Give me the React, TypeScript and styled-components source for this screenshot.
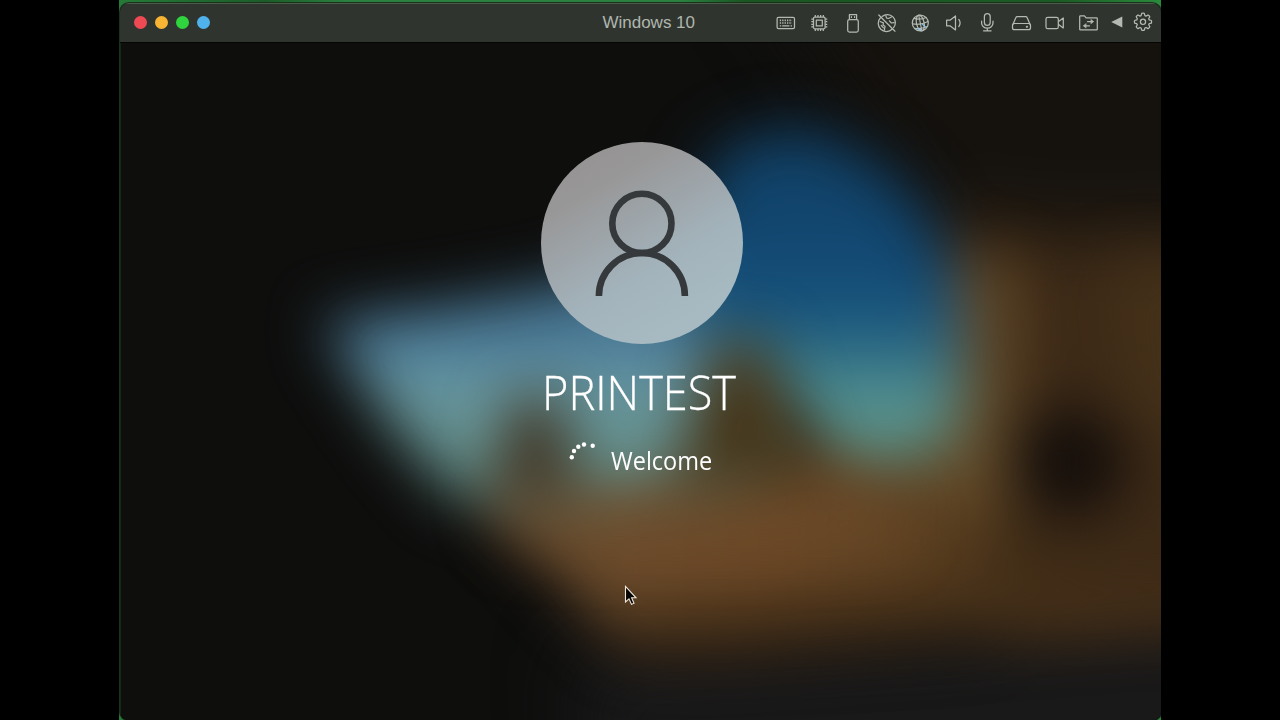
import React from "react";
import styled, { createGlobalStyle } from "styled-components";

const GlobalStyle = createGlobalStyle`
  * { box-sizing: border-box; }
  body { margin: 0; background: #000; overflow: hidden; }
`;

const Desktop = styled.div`
  width: 1280px;
  height: 720px;
  padding: 0 119px;
  background: #000;
  overflow: hidden;
`;

const Backdrop = styled.div`
  height: 720px;
  padding: 3px 0 0 1px;
  overflow: hidden;
  background: linear-gradient(90deg, #267a38 0%, #1c5c28 14%, #2b8040 22%, #2b8040 54%, #1a5522 60%, #1c5a24 90%, #2a8a3c 100%);
`;

const Window = styled.main`
  display: flex;
  flex-direction: column;
  width: 1041px;
  height: 717px;
  border-radius: 9px 9px 8px 8px;
  overflow: hidden;
  background: #0d0d0d;
  box-shadow: 0 0 0 1px #17331b;
`;

const TitleBar = styled.header`
  flex: none;
  display: grid;
  grid-template-columns: 1fr auto 1fr;
  align-items: center;
  height: 40px;
  padding: 0 9px 1px 13.5px;
  background: #2f352e;
  border-top: 1px solid #4b5a49;
  border-bottom: 1px solid #050505;
`;

const Lights = styled.div`
  display: flex;
  gap: 8px;
`;

const Light = styled.span<{ $color: string }>`
  width: 13px;
  height: 13px;
  border-radius: 50%;
  background: ${(p) => p.$color};
`;

const Title = styled.h1`
  margin: 0 0 0 12px;
  font: 400 17px/20px "Liberation Sans", Arial, sans-serif;
  color: #b0b6ae;
  white-space: nowrap;
`;

const Tools = styled.nav`
  display: flex;
  justify-content: flex-end;
  align-items: center;
  padding-top: 1px;
`;

const Tool = styled.svg<{ $w?: number }>`
  display: block;
  flex: none;
  width: ${(p) => p.$w ?? 33.6}px;
  height: 22px;
  fill: none;
  stroke: #b4bab1;
  stroke-width: 1.25;
  stroke-linecap: round;
  stroke-linejoin: round;
  overflow: visible;
`;

const Screen = styled.section`
  position: relative;
  flex: 1;
  overflow: hidden;
  border-left: 1px solid #14281a;
`;

const Wallpaper = styled.svg`
  position: absolute;
  inset: 0 0 0 -1px;
  width: 1041px;
  height: 677px;
`;

const Login = styled.div`
  position: relative;
  display: flex;
  flex-direction: column;
  align-items: center;
  width: 1040px;
  padding: 99px 0 0 1px;
`;

const Avatar = styled.div`
  width: 202px;
  height: 202px;
  border-radius: 50%;
  background: linear-gradient(150deg, #969393 12%, #989797 24%, #9ca2a6 38%, #a3b3bb 60%, #a7bac1 82%);
`;

const UserName = styled.h2`
  margin: 20px 4px 0 0;
  font: 300 47px/56px "Open Sans", "Noto Sans", sans-serif;
  color: #fff;
  white-space: nowrap;
  transform: scaleX(0.96);
  -webkit-text-stroke: 0.3px #fff;
`;

const Status = styled.div`
  display: flex;
  align-items: center;
  gap: 13px;
  width: 144px;
  height: 40px;
  margin: 20px 3px 0 0;
`;

const Spinner = styled.svg`
  flex: none;
  width: 30px;
  height: 30px;
  margin-bottom: 10px;
  fill: #fff;
`;

const Welcome = styled.span`
  font: 400 25px/34px "Open Sans", "Noto Sans", sans-serif;
  color: #fff;
  white-space: nowrap;
  transform: scaleX(0.94);
  transform-origin: left center;
`;

const Pointer = styled.svg`
  position: absolute;
  left: 503px;
  top: 542px;
  width: 14px;
  height: 21px;
`;

function Toolbar() {
  return (
    <Tools>
      <Tool viewBox="-16.8 -11 33.6 22">
        <rect x="-8.7" y="-5.6" width="17.4" height="11.2" rx="1.4" />
        <path d="M-6 -2.6H6.2M-6 0H6.2" strokeWidth="1.7" strokeDasharray="1.3 1.1" strokeLinecap="butt" />
        <path d="M-6 2.8h1.4M-3.6 2.8h7.2M4.8 2.8h1.4" strokeLinecap="butt" />
      </Tool>
      <Tool viewBox="-16.3 -11 33.6 22">
        <rect x="-5.8" y="-5.8" width="11.6" height="11.6" rx="1.2" />
        <rect x="-3" y="-3" width="6" height="6" />
        <path d="M-4 -6v-2M-1.3 -6v-2M1.3 -6v-2M4 -6v-2M-4 6v2M-1.3 6v2M1.3 6v2M4 6v2M-6 -4h-2M-6 -1.3h-2M-6 1.3h-2M-6 4h-2M6 -4h2M6 -1.3h2M6 1.3h2M6 4h2" strokeLinecap="butt" />
      </Tool>
      <Tool viewBox="-16 -11 33.6 22">
        <path d="M-3.6 -3.6V-8.4h7.2v4.8" />
        <rect x="-5.3" y="-3.5" width="10.6" height="12.6" rx="1.8" />
        <path d="M-1.6 -6.4v.8M1.6 -6.4v.8" />
      </Tool>
      <Tool viewBox="-16.8 -11 33.6 22">
        <path d="M-6.3 -5.3A8.1 8.1 0 0 0 5.5 6M-4.7 -6.6A8.1 8.1 0 0 1 6.8 4.7" />
        <path d="M-8 -8L8.2 8.2" />
        <path d="M-6.7 -1.5l3.3 1.4 -.4 2.2 2 1.2-.6 3.9M-1 -7.3l.8 2.4 2.4.2L4.6 -6M2.6 -2.2l2 2.2 2.8-.3M-5.5 2.5l2.2 2.3" strokeWidth="1.2" />
      </Tool>
      <Tool viewBox="-16.3 -11 33.6 22">
        <circle r="8" />
        <ellipse rx="3.8" ry="8" transform="rotate(-12)" />
        <path d="M-1.6 -7.8L1.6 7.8M-7.9 .8Q0 2.5 7.8 -1.5M-6.5 -4.6Q0 -2.7 5.7 -5.6M-5.8 5.4Q1 6.4 6.9 3.6" strokeWidth="1.1" />
        <path d="M-3 5.6l3.5 1M2 1l3 3" stroke="#8dc3ec" strokeWidth="1.1" />
      </Tool>
      <Tool viewBox="-16.8 -11 33.6 22">
        <path d="M-7.2 -2.8h3.4L1.7 -7V7L-3.8 2.8h-3.4zM5 -3.6Q7.6 0 5 3.6" />
      </Tool>
      <Tool viewBox="-16.3 -10.5 33.6 22">
        <rect x="-2.9" y="-9" width="5.8" height="12" rx="2.9" />
        <path d="M-5.7 -1.4V.5a5.7 5.2 0 0 0 11.4 0v-1.9M0 5.8V8.1M-3.8 8.3H3.8" />
      </Tool>
      <Tool viewBox="-16.5 -11 33.6 22">
        <path d="M-8.6 1.5L-5.7 -5.3Q-5.3 -6.3 -4.2 -6.3H4.2Q5.3 -6.3 5.7 -5.3L8.6 1.5" />
        <rect x="-9" y="0.5" width="18" height="6.2" rx="2" />
        <circle cx="5.4" cy="3.8" r=".5" />
      </Tool>
      <Tool viewBox="-16.8 -11 33.6 22">
        <rect x="-8.8" y="-5.7" width="12.3" height="11.4" rx="1.8" />
        <path d="M3.8 -1.5L8.5 -5V5L3.8 1.5" />
      </Tool>
      <Tool viewBox="-16.5 -11 33.6 22">
        <path d="M-8.8 6.2V-6.5Q-8.8 -7.2 -8 -7.2h4l1.6 2H8Q8.8 -5.2 8.8 -4.4V6.2Q8.8 7 8 7H-8Q-8.8 7 -8.8 6.2z" />
        <path d="M-1 -1.4H4.4M1 2.8H-4.4" />
        <path d="M2.6 -3.5L5.2 -1.4 2.6 .7zM-2.6 .7L-5.2 2.8 -2.6 4.9z" fill="#b4bab1" strokeWidth=".5" />
      </Tool>
      <Tool viewBox="-12 -11 28.7 22" $w={28.7}>
        <path d="M-5.8 -1L5.3 -6.4V4.4z" fill="#b4bab1" stroke="none" />
      </Tool>
      <Tool viewBox="-9 -11 18 22" $w={18}>
        <g transform="translate(0 -1.2)">
          <path d="M-1.3 -8.4Q0 -8.8 1.3 -8.4L1.9 -6.2 3 -5.7 5 -6.8Q6.2 -6.2 6.8 -5L5.7 -3 6.2 -1.9 8.4 -1.3Q8.8 0 8.4 1.3L6.2 1.9 5.7 3 6.8 5Q6.2 6.2 5 6.8L3 5.7 1.9 6.2 1.3 8.4Q0 8.8 -1.3 8.4L-1.9 6.2 -3 5.7 -5 6.8Q-6.2 6.2 -6.8 5L-5.7 3 -6.2 1.9 -8.4 1.3Q-8.8 0 -8.4 -1.3L-6.2 -1.9 -5.7 -3 -6.8 -5Q-6.2 -6.2 -5 -6.8L-3 -5.7 -1.9 -6.2z" />
          <circle r="2.6" />
        </g>
      </Tool>
    </Tools>
  );
}

function BlurredWallpaper() {
  return (
    <Wallpaper viewBox="120 43 1041 677" preserveAspectRatio="none">
      <defs>
        <filter id="soft" filterUnits="userSpaceOnUse" x="0" y="-100" width="1400" height="1000" colorInterpolationFilters="sRGB">
          <feGaussianBlur stdDeviation="29" />
        </filter>
        <filter id="wide" filterUnits="userSpaceOnUse" x="0" y="-100" width="1500" height="1000" colorInterpolationFilters="sRGB">
          <feGaussianBlur stdDeviation="36" />
        </filter>
        <linearGradient id="arch" gradientUnits="userSpaceOnUse" x1="0" y1="120" x2="0" y2="470">
          <stop offset="0" stopColor="#103e62" />
          <stop offset=".3" stopColor="#12466f" />
          <stop offset=".52" stopColor="#144f7a" />
          <stop offset=".67" stopColor="#2f6d84" />
          <stop offset=".8" stopColor="#569492" />
          <stop offset="1" stopColor="#5c897a" />
        </linearGradient>
        <linearGradient id="sea" gradientUnits="userSpaceOnUse" x1="0" y1="280" x2="0" y2="500">
          <stop offset="0" stopColor="#3b6884" />
          <stop offset=".3" stopColor="#4e7e9c" />
          <stop offset=".5" stopColor="#6999a0" />
          <stop offset="1" stopColor="#5f8378" />
        </linearGradient>
        <linearGradient id="sand" gradientUnits="userSpaceOnUse" x1="480" y1="0" x2="1161" y2="0">
          <stop offset="0" stopColor="#6a4e30" />
          <stop offset=".4" stopColor="#6d4826" />
          <stop offset=".65" stopColor="#5c4020" />
          <stop offset=".8" stopColor="#402c16" />
          <stop offset="1" stopColor="#3a2814" />
        </linearGradient>
      </defs>
      <rect x="120" y="43" width="1041" height="677" fill="#0e0e0d" />
      <g filter="url(#wide)">
        <path d="M700 -100H1500V260H960z" fill="#15120e" />
        <path d="M570 655L1500 620V900H600z" fill="#19191a" />
        <path d="M930 215L1040 235 1350 230V615L1000 630z" fill="#3d2a17" />
      </g>
      <g filter="url(#soft)">
        <path d="M440 450H1000L1050 560 1350 550V605L900 636 720 655 625 650z" fill="url(#sand)" />
        <path d="M610 605L900 585 1350 575V605L720 655 630 645z" fill="#463019" />
        <path d="M935 260H1015V510H935z" fill="#644a28" />
        <ellipse cx="1068" cy="462" rx="60" ry="54" fill="#140e0b" />
        <path d="M1112 260H1350V430H1130z" fill="#4a351b" opacity=".6" />
        <path d="M322 322L430 308 560 286 690 225 760 290V475L600 500H455L395 430z" fill="url(#sea)" />
        <path d="M705 170Q760 112 825 134Q957 190 960 345V410Q950 466 880 466Q820 455 765 395L690 330z" fill="url(#arch)" />
      </g>
      <g filter="url(#soft)">
        <path d="M514 395L556 395 580 490 490 500z" fill="#3f3323" />
        <path d="M714 340L765 340 815 475 670 490z" fill="#453519" />
        <path d="M490 495H900V545H510z" fill="#6c4c2c" opacity=".6" />
      </g>
    </Wallpaper>
  );
}

export default function App() {
  return (
    <Desktop>
      <GlobalStyle />
      <Backdrop>
        <Window>
          <TitleBar>
            <Lights>
              <Light $color="#ee4a54" />
              <Light $color="#f8b433" />
              <Light $color="#30d43e" />
              <Light $color="#50b2ec" />
            </Lights>
            <Title>Windows 10</Title>
            <Toolbar />
          </TitleBar>
          <Screen>
            <BlurredWallpaper />
            <Login>
              <Avatar>
                <svg width="202" height="202" viewBox="0 0 202 202" fill="none" stroke="#35393b" strokeWidth="6.6">
                  <circle cx="100.9" cy="81.4" r="29.6" />
                  <path d="M57.9 154A43 43 0 0 1 143.9 154" />
                </svg>
              </Avatar>
              <UserName>PRINTEST</UserName>
              <Status>
                <Spinner viewBox="568 441 30 30">
                  <circle cx="571.8" cy="458.2" r="2.2" />
                  <circle cx="574" cy="452" r="2.2" />
                  <circle cx="578.3" cy="447.8" r="2.2" />
                  <circle cx="584" cy="445.5" r="2.2" />
                  <circle cx="592.7" cy="446.8" r="2.2" />
                </Spinner>
                <Welcome>Welcome</Welcome>
              </Status>
            </Login>
            <Pointer viewBox="0 0 14 21">
              <path d="M1.5 1.5V17L5 13.8 7.5 19.4 10 18.3 7.6 12.8H12z" fill="#050505" stroke="#eee6da" strokeWidth="1.1" />
            </Pointer>
          </Screen>
        </Window>
      </Backdrop>
    </Desktop>
  );
}
